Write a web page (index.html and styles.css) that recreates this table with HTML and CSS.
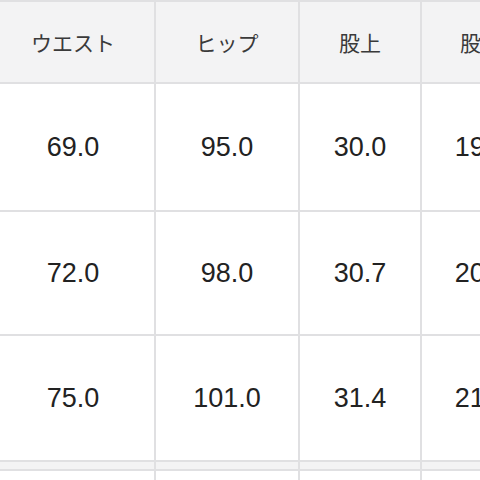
FILE: index.html
```html
<!DOCTYPE html>
<html lang="ja">
<head>
<meta charset="utf-8">
<link rel="stylesheet" href="styles.css">
</head>
<body>
<table class="size-table">
  <colgroup>
    <col class="c1"><col class="c2"><col class="c3"><col class="c4">
  </colgroup>
  <thead>
    <tr class="head-row">
      <th>ウエスト</th><th>ヒップ</th><th>股上</th><th>股下</th>
    </tr>
  </thead>
  <tbody>
    <tr class="r1"><td>69.0</td><td>95.0</td><td>30.0</td><td>19.0</td></tr>
    <tr class="r2"><td>72.0</td><td>98.0</td><td>30.7</td><td>20.0</td></tr>
    <tr class="r3"><td>75.0</td><td>101.0</td><td>31.4</td><td>21.0</td></tr>
    <tr class="strip"><td></td><td></td><td></td><td></td></tr>
    <tr class="tail"><td></td><td></td><td></td><td></td></tr>
  </tbody>
</table>
</body>
</html>
```
FILE: styles.css
```css
html, body {
  margin: 0;
  padding: 0;
  background: #ffffff;
  overflow: hidden;
  width: 480px;
  height: 480px;
}
.size-table {
  border-collapse: collapse;
  table-layout: fixed;
  width: 550px;
  margin-left: -10px;
  margin-top: 0;
  font-family: "Liberation Sans", "Noto Sans CJK JP", sans-serif;
}
.c1 { width: 164px; }
.c2 { width: 144px; }
.c3 { width: 122px; }
.c4 { width: 120px; }
.size-table th,
.size-table td {
  border: 2px solid #e0e0e2;
  text-align: center;
  vertical-align: middle;
  padding: 0;
}
.size-table th {
  background: #f3f3f4;
  font-family: "Noto Sans CJK JP", "Liberation Sans", sans-serif;
  font-weight: normal;
  font-size: 21px;
  color: #3a3a3a;
  height: 80px;
}
.size-table td {
  font-size: 27px;
  color: #222222;
}
.r1 td { height: 126px; }
.r2 td { height: 122px; }
.r3 td { height: 124px; }
.strip td { height: 7px; background: #f3f3f4; }
.tail td { height: 40px; border-bottom: none; }
```
